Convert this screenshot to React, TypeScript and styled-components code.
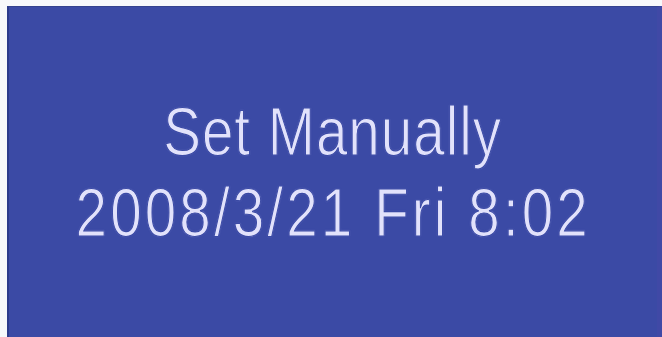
import React from "react";
import styled, { createGlobalStyle } from "styled-components";

const Global = createGlobalStyle`
  html, body {
    margin: 0;
    padding: 0;
    background: #f7f8fb;
    overflow: hidden;
  }
`;

const Screen = styled.div`
  box-sizing: border-box;
  margin: 6px 0 0 7px;
  width: 655px;
  height: 331px;
  background: #3b4aa5;
  border-left: 2px solid #2c3a8c;
  border-top: 1px solid #34428f;
  border-right: 5px solid #4049a6;
  display: flex;
  flex-direction: column;
  align-items: center;
  justify-content: center;
`;

const Line = styled.div<{ $spacing: number }>`
  font-family: "Liberation Sans", Arial, sans-serif;
  font-size: 69px;
  line-height: 81px;
  color: #e2e2fb;
  white-space: nowrap;
  letter-spacing: ${(p) => p.$spacing}px;
  transform: scaleX(0.82);
  transform-origin: center;
  -webkit-text-stroke: 1.2px #3b4aa5;
  text-shadow: 0 0 1.5px rgba(200, 200, 255, 0.5);
`;

export default function App() {
  return (
    <>
      <Global />
      <Screen>
        <Line $spacing={1.2}>Set Manually</Line>
        <Line $spacing={3.8}>2008/3/21 Fri 8:02</Line>
      </Screen>
    </>
  );
}
